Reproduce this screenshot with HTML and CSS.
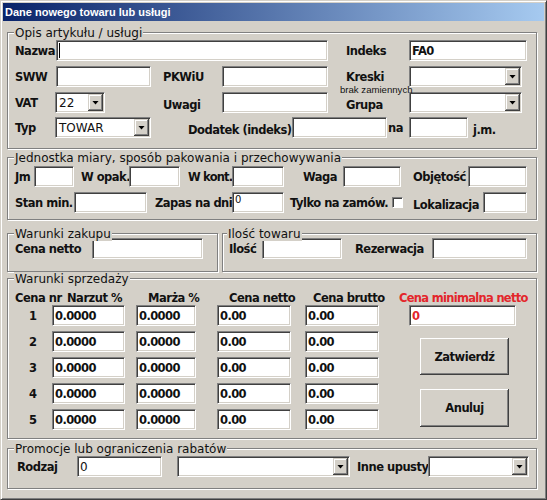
FILE: index.html
```html
<!DOCTYPE html>
<html lang="pl">
<head>
<meta charset="utf-8">
<title>Dane nowego towaru lub usługi</title>
<link rel="stylesheet" href="styles.css">
</head>
<body>
<div class="window">
  <div class="titlebar">Dane nowego towaru lub usługi</div>
  <div class="client">

    <section class="group g-opis">
      <span class="legend">Opis artykułu / usługi</span>
      <div class="row">
        <span class="lbl l-c1">Nazwa</span>
        <span class="field f-nazwa"><span class="caret"></span></span>
        <span class="lbl l-indeks">Indeks</span>
        <span class="field f-indeks">FA0</span>
      </div>
      <div class="row">
        <span class="lbl l-c1">SWW</span>
        <span class="field f-sww"></span>
        <span class="lbl l-pkwiu">PKWiU</span>
        <span class="field f-pkwiu"></span>
        <span class="lbl l-indeks l-kreski">Kreski<span class="note">brak zamiennych</span></span>
        <span class="field combo c-kreski"><span class="val"></span><span class="dd"><span class="tri"></span></span></span>
      </div>
      <div class="row">
        <span class="lbl l-c1b">VAT</span>
        <span class="field combo c-vat"><span class="val reg">22</span><span class="dd"><span class="tri"></span></span></span>
        <span class="lbl l-uwagi low">Uwagi</span>
        <span class="field f-pkwiu"></span>
        <span class="lbl l-indeks low">Grupa</span>
        <span class="field combo c-kreski"><span class="val"></span><span class="dd"><span class="tri"></span></span></span>
      </div>
      <div class="row row-d">
        <span class="lbl l-c1b">Typ</span>
        <span class="field combo c-typ"><span class="val reg">TOWAR</span><span class="dd"><span class="tri"></span></span></span>
        <span class="lbl l-dodatek low">Dodatek (indeks)</span>
        <span class="field f-dodatek"></span>
        <span class="lbl l-na">na</span>
        <span class="field f-na"></span>
        <span class="lbl l-jm low">j.m.</span>
      </div>
    </section>

    <section class="group g-jedn">
      <span class="legend">Jednostka miary, sposób pakowania i przechowywania</span>
      <div class="row">
        <span class="lbl l-jm2">Jm</span>
        <span class="field f-jm"></span>
        <span class="lbl l-wopak">W opak.</span>
        <span class="field f-wopak"></span>
        <span class="lbl l-wkont">W kont.</span>
        <span class="field f-wkont"></span>
        <span class="lbl l-waga">Waga</span>
        <span class="field f-waga"></span>
        <span class="lbl l-obj">Objętość</span>
        <span class="field f-obj"></span>
      </div>
      <div class="row">
        <span class="lbl l-stan">Stan min.</span>
        <span class="field f-stan"></span>
        <span class="lbl l-zapas">Zapas na dni</span>
        <span class="field f-zapas">0</span>
        <span class="lbl l-tylko">Tylko na zamów.</span>
        <span class="check"></span>
        <span class="lbl l-lok low">Lokalizacja</span>
        <span class="field f-lok"></span>
      </div>
    </section>

    <div class="pair">
      <section class="group g-zakup">
        <span class="legend">Warunki zakupu</span>
        <div class="row">
          <span class="lbl l-cena">Cena netto</span>
          <span class="field f-cenazak"></span>
        </div>
      </section>
      <section class="group g-ilosc">
        <span class="legend legend-near">Ilość towaru</span>
        <div class="row">
          <span class="lbl l-ilosc">Ilość</span>
          <span class="field f-ilosc"></span>
          <span class="lbl l-rez">Rezerwacja</span>
          <span class="field f-rez"></span>
        </div>
      </section>
    </div>

    <section class="group g-sprz">
      <span class="legend">Warunki sprzedaży</span>
      <div class="sprz">
        <div class="prices">
          <div class="phead">
            <span class="lbl h-nr">Cena nr</span>
            <span class="lbl h-narzut">Narzut %</span>
            <span class="lbl h-marza">Marża %</span>
            <span class="lbl h-netto">Cena netto</span>
            <span class="lbl h-brutto">Cena brutto</span>
          </div>
          <div class="prow">
            <span class="lbl num">1</span>
            <span class="field f-narzut">0.0000</span>
            <span class="field f-marza">0.0000</span>
            <span class="field f-netto">0.00</span>
            <span class="field f-netto">0.00</span>
          </div>
          <div class="prow">
            <span class="lbl num">2</span>
            <span class="field f-narzut">0.0000</span>
            <span class="field f-marza">0.0000</span>
            <span class="field f-netto">0.00</span>
            <span class="field f-netto">0.00</span>
          </div>
          <div class="prow">
            <span class="lbl num">3</span>
            <span class="field f-narzut">0.0000</span>
            <span class="field f-marza">0.0000</span>
            <span class="field f-netto">0.00</span>
            <span class="field f-netto">0.00</span>
          </div>
          <div class="prow">
            <span class="lbl num">4</span>
            <span class="field f-narzut">0.0000</span>
            <span class="field f-marza">0.0000</span>
            <span class="field f-netto">0.00</span>
            <span class="field f-netto">0.00</span>
          </div>
          <div class="prow">
            <span class="lbl num">5</span>
            <span class="field f-narzut">0.0000</span>
            <span class="field f-marza">0.0000</span>
            <span class="field f-netto">0.00</span>
            <span class="field f-netto">0.00</span>
          </div>
        </div>
        <div class="minside">
          <span class="lbl red h-min">Cena minimalna netto</span>
          <span class="field f-min red">0</span>
          <button class="winbtn b-ok" type="button">Zatwierdź</button>
          <button class="winbtn b-cancel" type="button">Anuluj</button>
        </div>
      </div>
    </section>

    <section class="group g-promo">
      <span class="legend">Promocje lub ograniczenia rabatów</span>
      <div class="row">
        <span class="lbl l-rodzaj">Rodzaj</span>
        <span class="field f-rodzaj reg">0</span>
        <span class="field combo c-rodzaj2"><span class="val"></span><span class="dd"><span class="tri"></span></span></span>
        <span class="lbl l-inne">Inne upusty</span>
        <span class="field combo c-inne"><span class="val"></span><span class="dd"><span class="tri"></span></span></span>
      </div>
    </section>

  </div>
</div>
</body>
</html>
```

FILE: styles.css
```css
* { box-sizing: border-box; }
html, body { margin: 0; padding: 0; }
body {
  background: #d4d0c8;
  font-family: "DejaVu Sans", sans-serif;
  font-size: 11px;
  color: #000;
}

.window {
  width: 547px;
  height: 500px;
  border: 1px solid;
  border-color: #d4d0c8 #404040 #404040 #d4d0c8;
  box-shadow: inset 1px 1px #fff, inset -1px -1px #808080;
  padding: 2px;
  background: #d4d0c8;
}

.titlebar {
  height: 18px;
  padding: 1px 0 0 2px;
  line-height: 17px;
  background: linear-gradient(to right, #0a246a, #a6caf0);
  color: #fff;
  font-family: "Liberation Sans", Arial, sans-serif;
  font-weight: bold;
  font-size: 11px;
  white-space: nowrap;
}

.client { padding-left: 4px; }

/* group boxes */
.group {
  position: relative;
  width: 530px;
  border: 1px solid #808080;
  box-shadow: inset 1px 1px #fff, 1px 1px #fff;
}
.legend {
  position: absolute;
  top: -7px;
  left: 6px;
  padding: 0 1px;
  background: #d4d0c8;
  font-family: "DejaVu Sans", sans-serif;
  font-size: 12px;
  line-height: 14px;
  font-weight: normal;
  color: #111;
  white-space: nowrap;
}
.legend-near { left: 4px; }

.g-opis { margin-top: 11px; padding: 7px 0 10px 7px; }
.g-jedn { margin-top: 8px; padding: 8px 0 6px 7px; }
.pair { display: flex; margin-top: 13px; }
.g-zakup { width: 211px; padding: 4px 0 12px 7px; }
.g-ilosc { width: 315px; margin-left: 4px; padding: 4px 0 12px 6px; }
.g-sprz { margin-top: 6px; padding: 12px 0 8px 7px; }
.g-promo { margin-top: 9px; padding: 7px 0 11px 9px; }

.row { display: flex; align-items: center; height: 21px; }
.row + .row { margin-top: 5px; }
.row.row-d { margin-top: 4px; }

/* labels */
.lbl {
  flex: none;
  font-weight: bold;
  font-size: 11.5px;
  letter-spacing: -0.5px;
  line-height: 14px;
  color: #111;
  white-space: nowrap;
}
.low { align-self: flex-end; margin-bottom: 1px; }

/* sunken edit field */
.field {
  flex: none;
  display: flex;
  align-items: center;
  height: 21px;
  padding-left: 2px;
  background: #fff;
  border: 1px solid;
  border-color: #808080 #fff #fff #808080;
  box-shadow: inset 1px 1px #404040, inset -1px -1px #d4d0c8;
  font-weight: bold;
  font-size: 11.5px;
  letter-spacing: -0.6px;
  color: #111;
  white-space: nowrap;
}
.reg { font-weight: normal; font-size: 12px; letter-spacing: 0; }
.caret { width: 1px; height: 15px; background: #000; }
.lbl.red, .field.red { color: #e3262b; }

/* combo box */
.combo { padding: 1px; justify-content: space-between; }
.combo .val { padding-left: 2px; }
.dd {
  width: 15px;
  height: 17px;
  display: flex;
  align-items: center;
  justify-content: center;
  background: #d4d0c8;
  box-shadow: inset -1px -1px #404040, inset 1px 1px #d4d0c8, inset -2px -2px #808080, inset 2px 2px #fff;
}
.tri {
  width: 7px;
  height: 4px;
  background: #000;
  clip-path: polygon(0 0, 100% 0, 50% 100%);
}

.check {
  flex: none;
  width: 11px;
  height: 11px;
  background: #fff;
  border: 1px solid;
  border-color: #808080 #fff #fff #808080;
  box-shadow: inset 1px 1px #404040;
}

/* group 1 */
.l-c1 { width: 41px; }
.l-c1b { width: 40px; }
.f-nazwa { width: 272px; }
.l-indeks { margin-left: 18px; width: 63px; }
.f-indeks { width: 118px; }
.f-sww { width: 95px; }
.l-pkwiu { margin-left: 12px; width: 59px; }
.f-pkwiu { width: 106px; }
.l-kreski { position: relative; }
.note {
  position: absolute;
  left: -6px;
  top: 15px;
  font-family: "Liberation Sans", Arial, sans-serif;
  font-size: 9.6px;
  line-height: 10px;
  font-weight: normal;
  letter-spacing: 0;
}
.c-kreski { width: 113px; }
.c-vat { width: 50px; }
.l-uwagi { margin-left: 58px; width: 59px; }
.c-typ { width: 96px; }
.l-dodatek { margin-left: 37px; width: 104px; }
.f-dodatek { width: 95px; }
.l-na { margin-left: 1px; width: 21px; }
.f-na { width: 59px; }
.l-jm { margin-left: 5px; }

/* group 2 */
.l-jm2 { width: 19px; }
.f-jm { width: 40px; }
.l-wopak { margin-left: 7px; width: 48px; }
.f-wopak { width: 51px; }
.l-wkont { margin-left: 8px; width: 44px; letter-spacing: -0.8px; }
.f-wkont { width: 52px; }
.l-waga { margin-left: 19px; width: 40px; }
.f-waga { width: 58px; }
.l-obj { margin-left: 12px; width: 55px; }
.f-obj { width: 59px; }
.l-stan { width: 59px; }
.f-stan { width: 73px; }
.l-zapas { margin-left: 8px; width: 77px; }
.f-zapas {
  width: 52px;
  align-items: flex-start;
  padding-top: 1px;
  font-weight: normal;
  font-size: 10px;
  letter-spacing: 0;
  line-height: 11px;
}
.l-tylko { margin-left: 6px; width: 102px; }
.l-lok { margin-left: 10px; width: 70px; }
.f-lok { width: 44px; }

/* group 3 */
.l-cena { width: 77px; }
.f-cenazak { width: 111px; }
.l-ilosc { width: 33px; }
.f-ilosc { width: 80px; }
.l-rez { margin-left: 13px; width: 77px; }
.f-rez { width: 95px; }

/* group 4 */
.sprz { display: flex; }
.prices { width: 364px; flex: none; }
.phead, .prow {
  display: grid;
  grid-template-columns: 37px 84px 81px 88px 74px;
  align-items: center;
}
.phead { height: 14px; }
.prow { height: 21px; margin-top: 5px; }
.phead + .prow { margin-top: 0; }
.h-narzut { padding-left: 15px; }
.h-marza { padding-left: 12px; }
.h-netto { padding-left: 12px; }
.h-brutto { padding-left: 8px; }
.num { padding-left: 14px; }
.f-narzut { width: 73px; }
.f-marza { width: 60px; }
.f-netto { width: 74px; }

.minside {
  margin-left: 20px;
  display: flex;
  flex-direction: column;
  align-items: flex-start;
}
.h-min { line-height: 14px; height: 14px; letter-spacing: -0.7px; }
.f-min { width: 107px; margin-left: 10px; }
.winbtn {
  margin-left: 21px;
  width: 89px;
  padding: 0;
  border: none;
  background: #d4d0c8;
  box-shadow: inset -1px -1px #404040, inset 1px 1px #fff, inset -2px -2px #808080, inset 2px 2px #d4d0c8;
  font-family: "DejaVu Sans", sans-serif;
  font-size: 11.5px;
  font-weight: bold;
  letter-spacing: -0.5px;
  color: #111;
}
.b-ok { margin-top: 12px; height: 37px; }
.b-cancel { margin-top: 14px; height: 38px; }

/* group 5 */
.l-rodzaj { width: 60px; }
.f-rodzaj { width: 85px; }
.c-rodzaj2 { margin-left: 15px; width: 173px; }
.l-inne { margin-left: 7px; width: 71px; }
.c-inne { width: 101px; }
```
